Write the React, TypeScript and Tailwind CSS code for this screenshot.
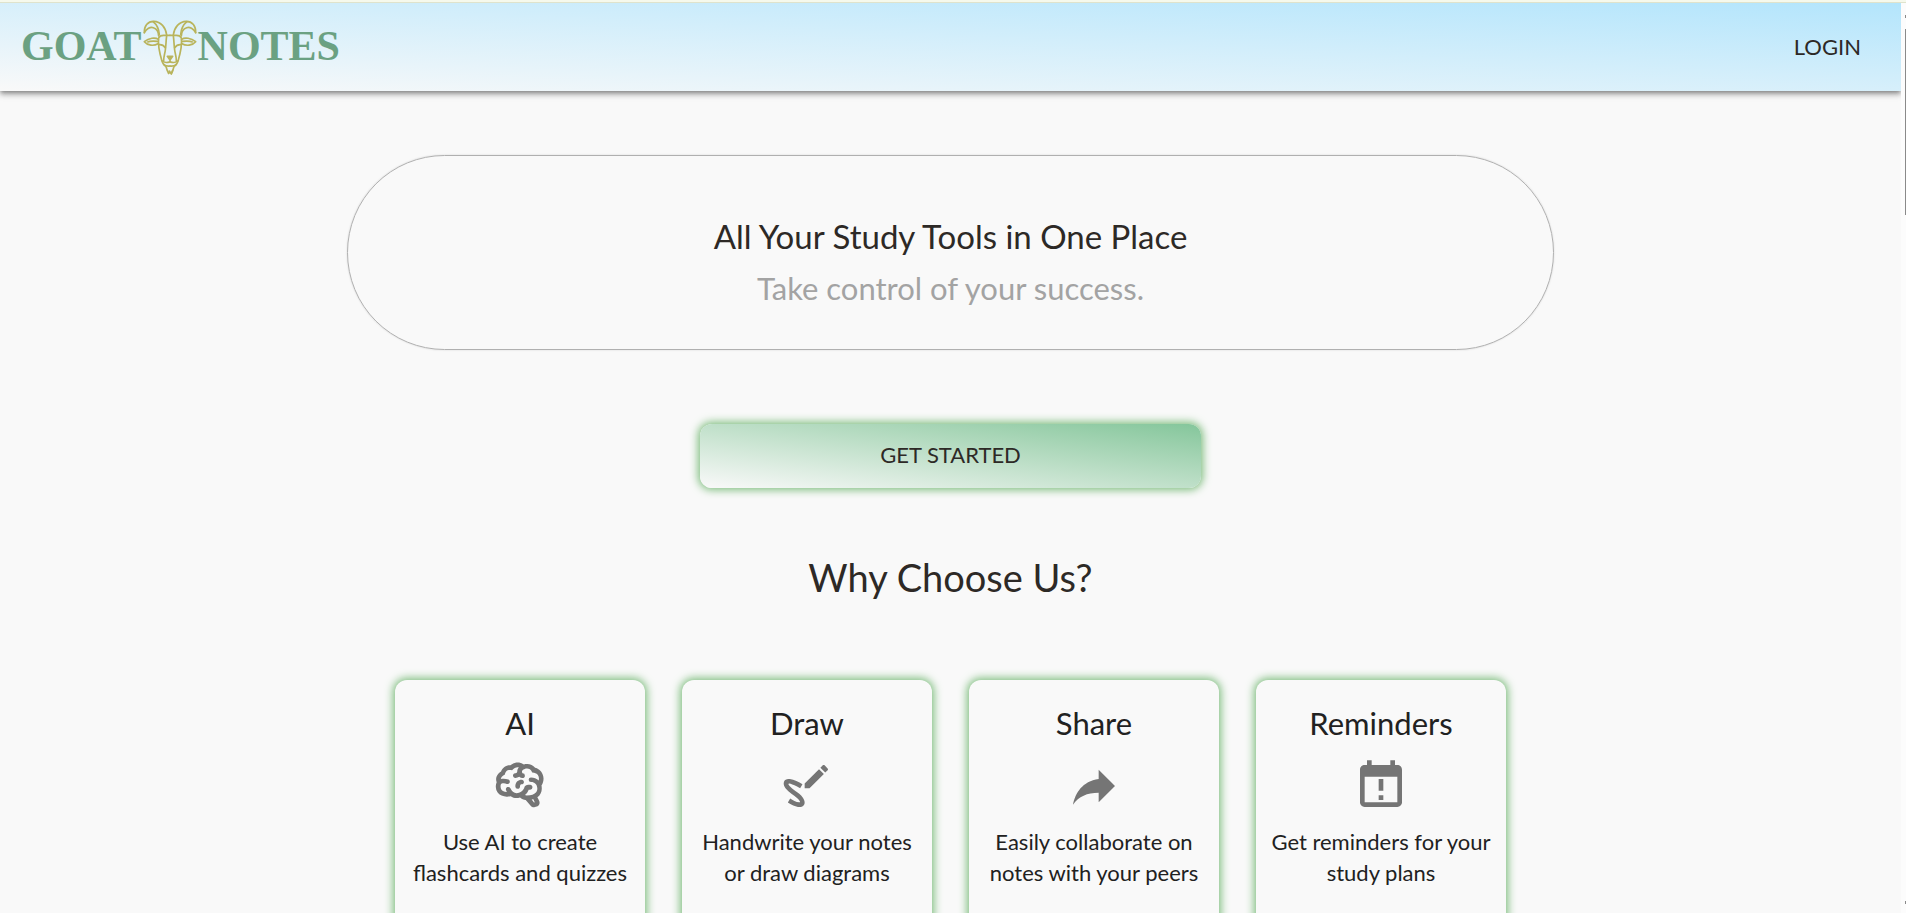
import React from "react";

const BRAIN =
  "M21.33,12.91C21.42,14.46 20.71,15.95 19.44,16.86L20.21,18.35C20.44,18.8 20.47,19.33 20.27,19.8C20.08,20.27 19.69,20.64 19.21,20.8L18.42,21.05C18.25,21.11 18.06,21.14 17.88,21.14C17.37,21.14 16.89,20.91 16.56,20.5L14.44,18C13.55,17.85 12.71,17.47 12,16.9C11.5,17.05 11,17.13 10.5,17.13C9.62,17.13 8.74,16.86 8,16.34C7.47,16.5 6.93,16.57 6.38,16.56C5.59,16.57 4.81,16.41 4.08,16.11C2.65,15.47 1.7,14.07 1.65,12.5C1.57,11.78 1.69,11.05 2,10.39C1.71,9.64 1.68,8.82 1.93,8.06C2.3,7.11 3,6.32 3.87,5.82C4.45,4.13 6.08,3 7.87,3.12C9.47,1.62 11.92,1.46 13.7,2.75C14.12,2.64 14.56,2.58 15,2.58C16.36,2.55 17.65,3.15 18.5,4.22C20.54,4.75 22,6.57 22.08,8.69C22.13,9.8 21.83,10.89 21.22,11.82C21.29,12.18 21.33,12.54 21.33,12.91M16.33,11.5C16.9,11.57 17.35,12 17.35,12.57A1,1 0 0,1 16.35,13.57H15.72C15.4,14.47 14.84,15.26 14.1,15.86C14.35,15.95 14.61,16 14.87,16.07C20,16 19.4,12.87 19.4,12.82C19.34,11.39 18.14,10.27 16.71,10.33A1,1 0 0,1 15.71,9.33A1,1 0 0,1 16.71,8.33C17.94,8.36 19.12,8.82 20.04,9.63C20.09,9.34 20.12,9.04 20.12,8.74C20.06,7.5 19.5,6.42 17.25,6.21C16,3.25 12.85,4.89 12.85,5.81V5.81C12.82,6.04 13.06,6.53 13.1,6.56A1,1 0 0,1 14.1,7.56C14.1,8.11 13.65,8.56 13.1,8.56V8.56C12.57,8.54 12.07,8.34 11.67,8C11.19,8.31 10.64,8.5 10.07,8.56V8.56C9.5,8.61 9.03,8.21 9,7.66C8.92,7.1 9.33,6.61 9.88,6.56C10.04,6.54 10.82,6.42 10.82,5.79V5.79C10.82,5.13 11.07,4.5 11.5,4C10.58,3.75 9.59,4.08 8.59,5.29C6.75,5 6,5.25 5.45,7.2C4.5,7.67 4,8 3.78,9C4.86,8.78 5.97,8.87 7,9.25C7.5,9.44 7.78,10 7.59,10.54C7.4,11.06 6.82,11.32 6.3,11.13C5.57,10.81 4.75,10.79 4,11.07C3.68,11.34 3.68,11.9 3.68,12.34C3.68,13.08 4.05,13.77 4.68,14.17C5.21,14.44 5.8,14.58 6.39,14.57C6.24,14.31 6.11,14.04 6,13.76C5.81,13.22 6.1,12.63 6.64,12.44C7.18,12.25 7.77,12.54 7.96,13.08C8.36,14.22 9.38,15 10.58,15.13C11.95,15.06 13.17,14.25 13.77,13C14,11.62 15.11,11.5 16.33,11.5M18.33,18.97L17.71,17.67L17,17.83L18,19.08L18.33,18.97M13.68,10.36C13.7,9.83 13.3,9.38 12.77,9.33C12.06,9.29 11.37,9.53 10.84,10C10.27,10.58 9.97,11.38 10,12.19A1,1 0 0,0 11,13.19C11.57,13.19 12,12.74 12,12.19C12,11.92 12.07,11.65 12.23,11.43C12.35,11.33 12.5,11.28 12.67,11.28C13.21,11.3 13.68,10.9 13.68,10.36Z";
const DRAW =
  "M9.75 20.85C11.53 20.15 11.14 18.22 10.24 17C9.35 15.75 8.12 14.89 6.88 14.06C6 13.5 5.19 12.8 4.54 12C4.26 11.67 3.69 11.06 4.27 10.94C4.86 10.82 5.88 11.4 6.4 11.62C7.31 12 8.21 12.44 9.05 12.96L10.06 11.26C8.5 10.23 6.5 9.32 4.64 9.05C3.58 8.89 2.46 9.11 2.1 10.26C1.78 11.25 2.29 12.25 2.87 13.03C4.24 14.86 6.37 15.74 7.96 17.32C8.3 17.65 8.71 18.04 8.91 18.5C9.12 18.94 9.07 18.97 8.6 18.97C7.36 18.97 5.81 18 4.8 17.36L3.79 19.06C5.32 20 7.88 21.47 9.75 20.85M20.84 5.25C21.06 5.03 21.06 4.68 20.84 4.46L19.54 3.16C19.33 2.95 18.97 2.95 18.76 3.16L17.74 4.18L19.82 6.26M11 10.92V13H13.08L19.23 6.85L17.15 4.77L11 10.92Z";
const SHARE = "M21,12L14,5V9C7,10 4,15 3,20C5.5,16.5 9,14.9 14,14.9V19L21,12Z";
const CALENDAR =
  "M19 19H5V8H19M19 3H18V1H16V3H8V1H6V3H5C3.89 3 3 3.9 3 5V19C3 20.1 3.9 21 5 21H19C20.1 21 21 20.1 21 19V5C21 3.9 20.1 3 19 3M11 9H13V14H11ZM11 16H13V18H11Z";

const features = [
  { title: "AI", icon: BRAIN, lines: ["Use AI to create", "flashcards and quizzes"] },
  { title: "Draw", icon: DRAW, lines: ["Handwrite your notes", "or draw diagrams"] },
  { title: "Share", icon: SHARE, lines: ["Easily collaborate on", "notes with your peers"] },
  { title: "Reminders", icon: CALENDAR, lines: ["Get reminders for your", "study plans"] },
];

function GoatHead() {
  return (
    <svg
      viewBox="428 60 162 168"
      className="mx-px mt-1 h-14 w-[54px] shrink-0"
      fill="none"
      stroke="#b9b45c"
      strokeWidth="5"
      strokeLinecap="round"
      strokeLinejoin="round"
      aria-hidden="true"
    >
      {[undefined, "translate(1018 0) scale(-1 1)"].map((flip, i) => (
        <g key={i} transform={flip}>
          <path d="M432 98C431 78 442 64 460 64C482 65 496 82 499 105" />
          <path d="M432 98C438 86 450 80 459 83C470 87 475 96 475 108" />
          <path d="M458 65C467 72 476 88 477 104" />
          <path d="M474 118C464 111 446 114 432 125C442 137 460 139 473 131" />
          <path d="M442 126C450 122 462 123 472 124" />
          <path d="M509 106H490C483 106 477 109 475 114C472 134 478 160 485 184C488 194 495 196 498 202C499 210 503 216 505 220" />
          <path d="M499 107C497 122 497 136 495 150C494 160 490 168 490 182" />
          <path d="M476 134C484 133 490 136 495 143" />
          <path d="M487 183C494 190 502 188 509 185" />
          <path d="M490 194C498 199 504 199 509 198" />
        </g>
      ))}
      <path d="M501 169H517L509 180ZM509 180V186" fill="#b9b45c" />
      <path d="M505 220L507 213L513 222L517 212" />
    </svg>
  );
}

export default function App() {
  return (
    <div className="flex h-screen flex-col overflow-hidden bg-[#f9f9f9] font-['Lato',sans-serif] text-[#2d2926]">
      <div className="h-[3px] shrink-0 border-b border-[#dfe3cc] bg-[#f6f9ec]" />
      <div className="flex min-h-0 flex-1">
        <div className="min-w-0 flex-1 overflow-hidden">
          <header className="flex h-[88px] items-center justify-between bg-linear-to-tr from-[#f9f9f9] to-[#b3e5fc] pr-10 pb-0.5 pl-[21px] shadow-[0_2px_4px_-1px_rgba(0,0,0,0.3),0_4px_5px_0_rgba(0,0,0,0.2),0_1px_10px_0_rgba(0,0,0,0.15)]">
            <a
              href="#home"
              className="flex items-center font-['Liberation_Serif',serif] text-[42px] leading-none font-bold text-[#6ba182]"
            >
              <span>GOAT</span>
              <GoatHead />
              <span>NOTES</span>
            </a>
            <a href="#login" className="text-[22px]">
              LOGIN
            </a>
          </header>

          <main className="flex flex-col items-center">
            <section className="mt-16 flex h-[195px] w-[1207px] max-w-full flex-col items-center justify-center rounded-full border border-[#b0b0b0] pt-[18px] text-center shadow-[0_0_2px_rgba(0,0,0,0.15)]">
              <h1 className="text-[33px] leading-[52px]">All Your Study Tools in One Place</h1>
              <p className="text-[31px] leading-[52px] text-[#a3a3a3]">Take control of your success.</p>
            </section>

            <button
              type="button"
              className="mt-[74px] h-16 w-[501px] max-w-full cursor-pointer rounded-xl bg-linear-to-tr from-[#f9f9f9] to-[#84c69b] pb-1 text-[22px] shadow-[0_0_8px_2px_#7dbd7d]"
            >
              GET STARTED
            </button>

            <h2 className="mt-[63px] text-[38px] leading-[52px]">Why Choose Us?</h2>

            <section className="mt-[77px] flex gap-[37px] text-[#212121]">
              {features.map(({ title, icon, lines }) => (
                <article
                  key={title}
                  className="flex h-[280px] w-[250px] flex-col items-center rounded-xl bg-[#f9f9f9] pt-[23px] text-center shadow-[0_0_8px_2px_#7dbd7d]"
                >
                  <h3 className="text-[31px] leading-10">{title}</h3>
                  <svg viewBox="0 0 24 24" className="mt-[15px] size-14 fill-[#757575]" aria-hidden="true">
                    <path d={icon} fillRule="evenodd" />
                  </svg>
                  <p className="mt-3 text-[22px] leading-[31px] whitespace-nowrap">
                    {lines[0]}
                    <br />
                    {lines[1]}
                  </p>
                </article>
              ))}
            </section>
          </main>
        </div>

        <div className="flex w-[5px] shrink-0 flex-col items-end bg-[#fcfcfc]" aria-hidden="true">
          <div className="mt-3 h-[3px] w-px bg-[#8a8a8a]" />
          <div className="mt-[11px] h-[186px] w-px bg-[#8a8a8a]" />
          <div className="mt-auto mb-[9px] h-[3px] w-px bg-[#8a8a8a]" />
        </div>
      </div>
    </div>
  );
}
